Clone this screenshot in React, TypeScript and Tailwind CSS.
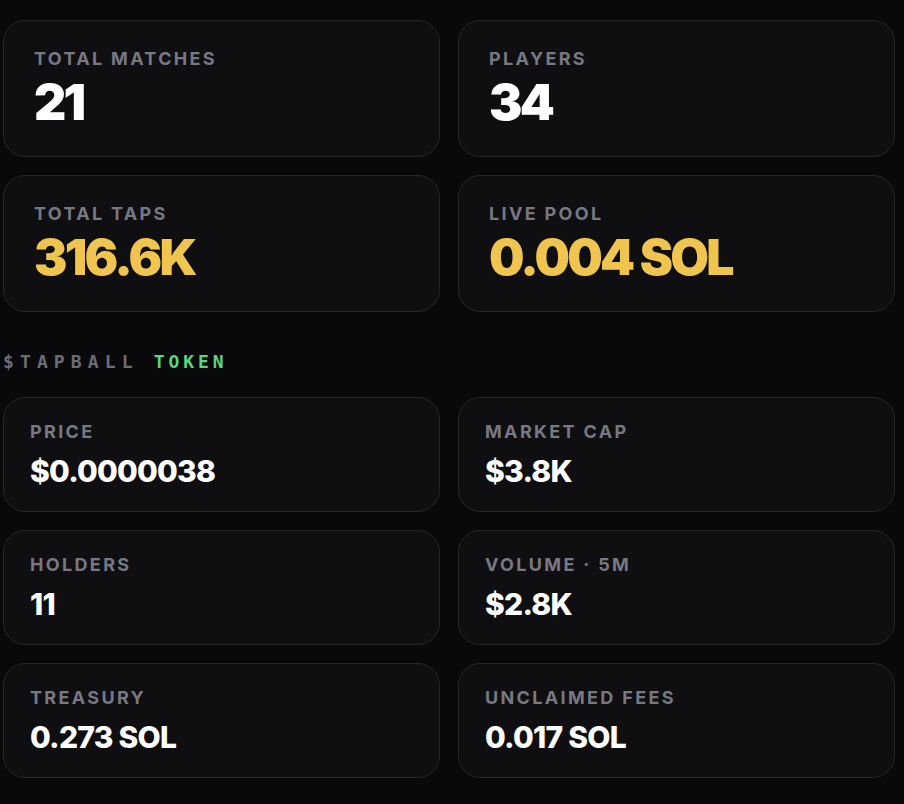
import React from "react";

type Stat = { label: string; value: string };

const gameStats: { label: string; value: string; gold?: boolean }[] = [
  { label: "Total Matches", value: "21" },
  { label: "Players", value: "34" },
  { label: "Total Taps", value: "316.6K", gold: true },
  { label: "Live Pool", value: "0.004 SOL", gold: true },
];

const tokenStats: Stat[] = [
  { label: "Price", value: "$0.0000038" },
  { label: "Market Cap", value: "$3.8K" },
  { label: "Holders", value: "11" },
  { label: "Volume · 5m", value: "$2.8K" },
  { label: "Treasury", value: "0.273 SOL" },
  { label: "Unclaimed Fees", value: "0.017 SOL" },
];

const labelCls =
  "font-['Inter',sans-serif] text-[18px] font-bold uppercase leading-5 tracking-[0.13em] text-[#787882]";

function BigCard({ label, value, gold }: { label: string; value: string; gold?: boolean }) {
  return (
    <div className="flex h-[137px] flex-col rounded-[22px] border border-[#26262b] bg-[#0f0f12] px-[30px] pt-[28px]">
      <span className={labelCls}>{label}</span>
      <span
        className={`mt-[13px] font-['Inter',sans-serif] text-[50px] font-black leading-[40px] tracking-[-0.055em] ${
          gold ? "text-[#efc44f]" : "text-white"
        }`}
      >
        {value}
      </span>
    </div>
  );
}

function TokenCard({ label, value }: Stat) {
  return (
    <div className="flex h-[115px] flex-col rounded-[22px] border border-[#26262b] bg-[#0f0f12] px-[26px] pt-[24px]">
      <span className={labelCls}>{label}</span>
      <span className="mt-[14px] font-['Inter',sans-serif] text-[30px] font-extrabold leading-[30px] tracking-[-0.025em] text-white">
        {value}
      </span>
    </div>
  );
}

export default function App() {
  return (
    <div className="min-h-[804px] w-full bg-[#09090c] pl-[3px] pt-[20px]">
      <div className="w-[892px]">
        {/* match stats */}
        <div className="grid grid-cols-2 gap-[18px]">
          {gameStats.map((s) => (
            <BigCard key={s.label} {...s} />
          ))}
        </div>

        {/* token heading */}
        <div className="mb-[23px] mt-[38px] flex items-center font-['DejaVu_Sans_Mono',monospace] text-[18px] font-bold uppercase leading-6">
          <span className="tracking-[0.34em] text-[#6c6c76]">$tapball</span>
          <span className="ml-[15px] tracking-[0.22em] text-[#5bd57c]">token</span>
        </div>

        {/* token stats */}
        <div className="grid grid-cols-2 gap-[18px]">
          {tokenStats.map((s) => (
            <TokenCard key={s.label} {...s} />
          ))}
        </div>
      </div>
    </div>
  );
}
